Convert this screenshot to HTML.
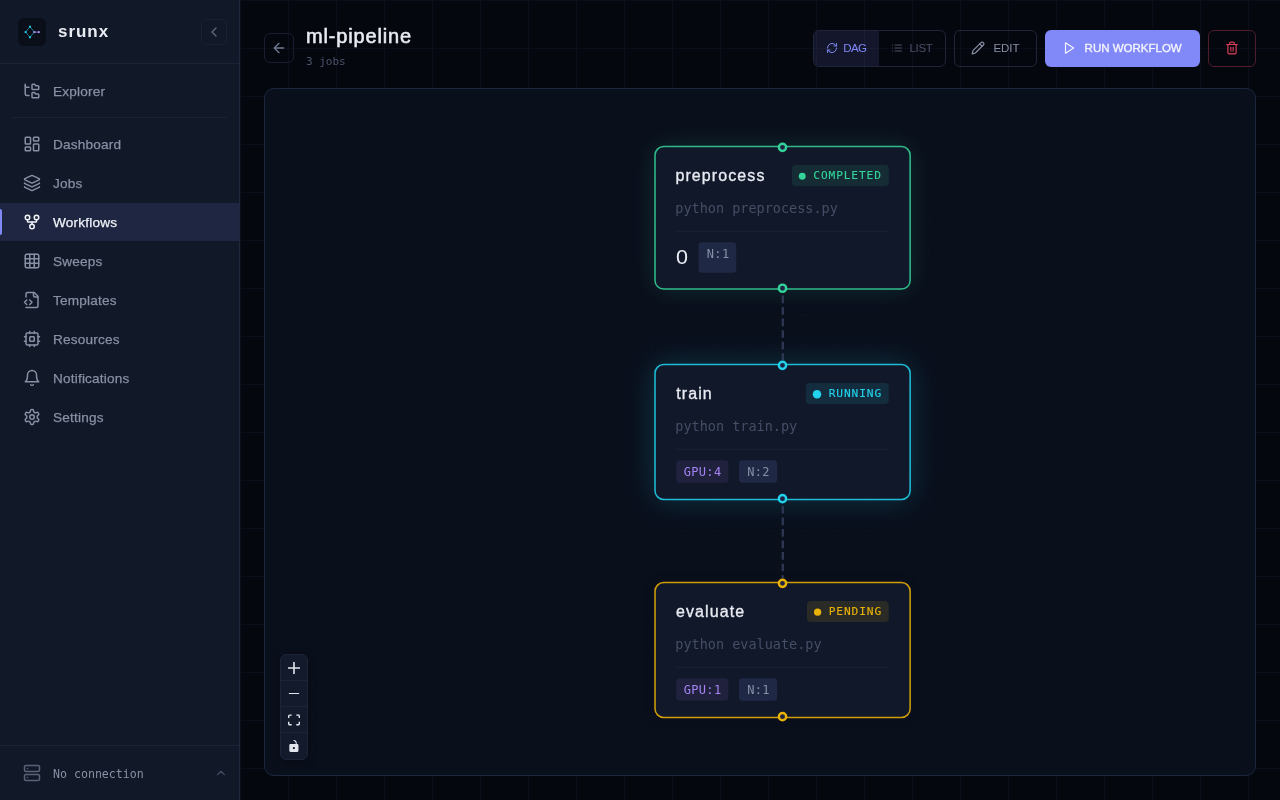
<!DOCTYPE html>
<html lang="en">
<head>
<meta charset="utf-8">
<title>srunx - ml-pipeline</title>
<style>
*{box-sizing:border-box;margin:0;padding:0}
html,body{width:1280px;height:800px;overflow:hidden}
body{position:relative;background:#05070f;color:#e6e9f0;font-family:"Liberation Sans",sans-serif}
#root{position:absolute;left:0;top:0;width:1280px;height:800px;will-change:transform}
svg.ic{fill:none;stroke:currentColor;stroke-width:2;stroke-linecap:round;stroke-linejoin:round;display:block}
.mono{font-family:"DejaVu Sans Mono","Liberation Mono",monospace}

/* main background grid */
#main{position:absolute;left:240px;top:0;width:1040px;height:800px;background-color:#05070f;
 background-image:linear-gradient(to right,#0b0e1a 1px,transparent 1px),linear-gradient(to bottom,#0b0e1a 1px,transparent 1px);
 background-size:48px 48px;background-position:-240px 0}

/* sidebar */
#side{position:absolute;left:0;top:0;width:240px;height:800px;background:#111827;border-right:1px solid #1e293d}
#side .hdr{position:absolute;left:0;top:0;width:239px;height:64px;border-bottom:1px solid #1c2336}
#logo{position:absolute;left:18px;top:18px;width:28px;height:28px;border-radius:6px;background:#0a0e18}
#brand{position:absolute;left:58px;top:21px;font-weight:700;font-size:17px;line-height:22px;color:#e8ebf2;letter-spacing:.95px;white-space:nowrap}
#collapse{position:absolute;left:201px;top:19px;width:26px;height:26px;border:1px solid #1a2135;border-radius:6px;color:#5d667b}
.nav{position:absolute;left:0;width:239px;height:38px;color:#8890a5;font-size:13.6px;letter-spacing:.19px}
.nav svg{position:absolute;left:23px;top:10px;width:18px;height:18px}
.nav span{position:absolute;left:53px;top:.6px;line-height:38px;white-space:nowrap;-webkit-text-stroke:.25px currentColor}
.nav.active{background:#1e2641;color:#f1f3f8}
.nav.active:before{content:"";position:absolute;left:0;top:6px;width:2px;height:26px;background:#8188f5;border-radius:0 2px 2px 0}
#sep{position:absolute;left:12px;top:117px;width:215px;height:1px;background:#1a2133}
#foot{position:absolute;left:0;top:745px;width:239px;height:55px;border-top:1px solid #1c2336;color:#6b7488}
#foot svg.srv{position:absolute;left:23px;top:18px;width:18px;height:18px;color:#596277}
#foot span{position:absolute;left:53px;top:.5px;line-height:55px;font-size:11.6px;white-space:nowrap;color:#8890a5}
#foot svg.chev{position:absolute;left:214px;top:20.4px;width:14px;height:14px;color:#434c60}

/* header */
#back{position:absolute;left:264px;top:33px;width:30px;height:30px;border:1px solid #181d2f;border-radius:6px;color:#6f7990}
#back svg{width:16px;height:16px;margin:6px}
#title{position:absolute;left:306px;top:23.6px;font-size:20px;line-height:24px;font-weight:400;-webkit-text-stroke:.55px #e8ebf2;letter-spacing:.83px;color:#e8ebf2;white-space:nowrap}
#sub{position:absolute;left:306px;top:54.8px;font-size:11px;line-height:14px;color:#4b5468;white-space:nowrap}
.btn{position:absolute;top:30px;height:37px;border:1px solid #1f2437;border-radius:6px;font-size:11.5px;color:#8890a5;white-space:nowrap}
.btn svg{position:absolute;width:14px;height:14px;top:10px}
.btn span{position:absolute;top:0;line-height:35px}
#seg{left:813px;width:133px;overflow:hidden}
#seg .on{position:absolute;left:0;top:0;width:65px;height:35px;background:rgba(129,140,248,.12)}
#edit{left:954px;width:83px}
#run{left:1045px;width:155px;border:none;background:#8188f7;color:#f3f4ff}
#del{left:1208px;width:48px;border-color:#4f1d2c;color:#e0405a}

/* canvas */
#canvas{position:absolute;left:264px;top:88px;width:992px;height:688px;border:1px solid #1c2740;border-radius:10px;background-color:#0a0f1c;overflow:hidden;
 background-image:radial-gradient(circle,#111727 0.5px,transparent 1.1px);background-size:30.8px 30.8px;background-position:1.6px -5.0px}

#shapes{position:absolute;left:0;top:0;display:block}
.glow{position:absolute;border-radius:9px}
/* flow text (svg) */
#shapes text{white-space:pre}
#shapes .mono{font-family:"DejaVu Sans Mono","Liberation Mono",monospace}
#shapes .t{font-family:"Liberation Sans",sans-serif;font-size:16px;fill:#e8ebf2;stroke:#e8ebf2;stroke-width:.32px;letter-spacing:1.1px}
#shapes .bt{font-size:11.2px;letter-spacing:.88px;stroke-width:.12px}
#shapes .cmd{font-size:13.5px;fill:#444e65}
#shapes .ct{font-size:12px;letter-spacing:.33px}
#shapes .ct.g{fill:#a583f2}
#shapes .ct.n{fill:#8890a5}
#shapes .zero{font-family:"Liberation Sans",sans-serif;font-size:19.6px;fill:#e8ebf2}

/* controls */
#ctl{position:absolute;left:280px;top:654px;width:28px;height:106px;border:1px solid #1c2438;border-radius:6px;background:#131a2b;overflow:hidden;box-shadow:0 2px 8px rgba(0,0,0,.4)}
#ctl div{width:26px;height:26px;border-bottom:1px solid #1c2438;display:flex;align-items:center;justify-content:center}
#ctl div:last-child{border-bottom:none}
#ctl svg{fill:#e2e5ee;width:12px;height:12px;display:block}
</style>
</head>
<body>
<div id="root">
<div id="main"></div>
<div id="back"><svg class="ic" viewBox="0 0 24 24"><path d="m12 19-7-7 7-7"/><path d="M19 12H5"/></svg></div>
<div id="title">ml-pipeline</div>
<div id="sub" class="mono">3 jobs</div>
<div id="seg" class="btn"><div class="on"></div>
  <svg class="ic" viewBox="0 0 24 24" style="left:12px;top:11px;width:12px;height:12px;color:#8188f7"><path d="M3 12a9 9 0 0 1 9-9 9.75 9.75 0 0 1 6.74 2.74L21 8"/><path d="M21 3v5h-5"/><path d="M21 12a9 9 0 0 1-9 9 9.75 9.75 0 0 1-6.74-2.74L3 16"/><path d="M8 16H3v5"/></svg>
  <span style="left:29.2px;color:#8188f7;letter-spacing:-.6px">DAG</span>
  <svg class="ic" viewBox="0 0 24 24" style="left:77px;top:11px;width:12px;height:12px;color:#4a5166"><path d="M3 12h.01"/><path d="M3 18h.01"/><path d="M3 6h.01"/><path d="M8 12h13"/><path d="M8 18h13"/><path d="M8 6h13"/></svg>
  <span style="left:95.5px;color:#4a5166;letter-spacing:-.3px">LIST</span>
</div>
<div id="edit" class="btn">
  <svg class="ic" viewBox="0 0 24 24" style="left:16.1px"><path d="M21.174 6.812a1 1 0 0 0-3.986-3.987L3.842 16.174a2 2 0 0 0-.5.83l-1.321 4.352a.5.5 0 0 0 .623.622l4.353-1.32a2 2 0 0 0 .83-.497z"/><path d="m15 5 4 4"/></svg>
  <span style="left:38.4px;top:-.4px">EDIT</span>
</div>
<div id="run" class="btn">
  <svg class="ic" viewBox="0 0 24 24" style="left:16.8px;top:11px"><polygon points="6 3 20 12 6 21 6 3"/></svg>
  <span style="left:39.6px;line-height:37px;-webkit-text-stroke:.35px currentColor">RUN WORKFLOW</span>
</div>
<div id="del" class="btn">
  <svg class="ic" viewBox="0 0 24 24" style="left:16.1px"><path d="M3 6h18"/><path d="M19 6v14c0 1-1 2-2 2H7c-1 0-2-1-2-2V6"/><path d="M8 6V4c0-1 1-2 2-2h4c1 0 2 1 2 2v2"/><line x1="10" x2="10" y1="11" y2="17"/><line x1="14" x2="14" y1="11" y2="17"/></svg>
</div>
<div id="canvas"></div>
<div class="glow" style="left:655.25px;top:146.80px;width:254.65px;height:141.97px;box-shadow:0 0 26px rgba(52,211,153,.16)"></div>
<div class="glow" style="left:655.25px;top:364.80px;width:254.65px;height:134.40px;box-shadow:0 0 30px rgba(34,211,238,.22)"></div>
<div class="glow" style="left:655.25px;top:582.80px;width:254.65px;height:134.40px;box-shadow:0 0 12px rgba(0,0,0,.18)"></div>
<svg id="shapes" width="1280" height="800" viewBox="0 0 1280 800">
<line x1="782.8" y1="295.5" x2="782.8" y2="360.0" stroke="#2f3853" stroke-width="2.3" stroke-dasharray="7.7 3.85"/>
<line x1="782.8" y1="505.9" x2="782.8" y2="578.0" stroke="#2f3853" stroke-width="2.3" stroke-dasharray="7.7 3.85"/>
<rect x="655.02" y="146.57" width="255.11" height="142.43" rx="8.6" fill="#111829" stroke="#34d399" stroke-opacity=".88" stroke-width="1.54"/>
<rect x="791.9" y="165.00" width="96.85" height="20.9" rx="3.6" fill="#152c34"/>
<circle cx="802.25" cy="176.20" r="3.45" fill="#34d399"/>
<rect x="676.1" y="230.70" width="212.7" height="1.1" fill="#1c2236"/>
<text class="t" x="675.4" y="181">preprocess</text>
<text class="bt mono" x="813.30" y="179" fill="#34d399" stroke="#34d399">COMPLETED</text>
<text class="cmd mono" x="675.3" y="213">python preprocess.py</text>
<rect x="655.02" y="364.57" width="255.11" height="134.86" rx="8.6" fill="#111829" stroke="#22d3ee" stroke-opacity=".88" stroke-width="1.54"/>
<rect x="805.9" y="383.00" width="82.85" height="20.9" rx="3.6" fill="#142d3e"/>
<circle cx="817.0" cy="394.20" r="4.25" fill="#22d3ee"/>
<rect x="676.1" y="448.70" width="212.7" height="1.1" fill="#1c2236"/>
<text class="t" x="676.2" y="399">train</text>
<text class="bt mono" x="828.70" y="397" fill="#22d3ee" stroke="#22d3ee">RUNNING</text>
<text class="cmd mono" x="675.3" y="431">python train.py</text>
<rect x="655.02" y="582.57" width="255.11" height="134.86" rx="8.6" fill="#111829" stroke="#eab308" stroke-opacity=".88" stroke-width="1.54"/>
<rect x="807.0" y="601.00" width="81.75" height="20.9" rx="3.6" fill="#2a2a26"/>
<circle cx="817.6" cy="612.20" r="3.6" fill="#eab308"/>
<rect x="676.1" y="666.70" width="212.7" height="1.1" fill="#1c2236"/>
<text class="t" x="675.9" y="617">evaluate</text>
<text class="bt mono" x="828.70" y="615" fill="#eab308" stroke="#eab308">PENDING</text>
<text class="cmd mono" x="675.3" y="649">python evaluate.py</text>
<rect x="698.6" y="242.25" width="37.65" height="30.5" rx="3.6" fill="#1f2945"/>
<text class="ct n mono" x="706.80" y="258">N:1</text>
<rect x="676.1" y="460.25" width="52.3" height="22.6" rx="3.6" fill="#1f213d"/>
<text class="ct g mono" x="683.70" y="476">GPU:4</text>
<rect x="739.0" y="460.25" width="38.1" height="22.6" rx="3.6" fill="#1f2945"/>
<text class="ct n mono" x="747.20" y="476">N:2</text>
<rect x="676.1" y="678.25" width="52.3" height="22.6" rx="3.6" fill="#1f213d"/>
<text class="ct g mono" x="683.70" y="694">GPU:1</text>
<rect x="739.0" y="678.25" width="38.1" height="22.6" rx="3.6" fill="#1f2945"/>
<text class="ct n mono" x="747.20" y="694">N:1</text>
<text class="zero" x="675.9" y="264" transform="translate(675.9 0) scale(1.1 1) translate(-675.9 0)">0</text>
<circle cx="782.5" cy="147.34" r="3.65" fill="#1e2442" stroke="#34d399" stroke-width="2.4"/>
<circle cx="782.5" cy="288.23" r="3.65" fill="#1e2442" stroke="#34d399" stroke-width="2.4"/>
<circle cx="782.5" cy="365.34" r="3.65" fill="#1e2442" stroke="#22d3ee" stroke-width="2.4"/>
<circle cx="782.5" cy="498.66" r="3.65" fill="#1e2442" stroke="#22d3ee" stroke-width="2.4"/>
<circle cx="782.5" cy="583.34" r="3.65" fill="#1e2442" stroke="#eab308" stroke-width="2.4"/>
<circle cx="782.5" cy="716.66" r="3.65" fill="#1e2442" stroke="#eab308" stroke-width="2.4"/>
</svg>
<div id="ctl">
  <div><svg viewBox="0 0 32 32"><path d="M32 18.133H18.133V32h-4.266V18.133H0v-4.266h13.867V0h4.266v13.867H32z"/></svg></div>
  <div><svg viewBox="0 0 32 5" style="height:1.6px"><path d="M0 0h32v4.2H0z"/></svg></div>
  <div><svg viewBox="0 0 32 30"><path d="M3.692 4.63c0-.53.4-.938.939-.938h5.215V0H4.708C2.13 0 0 2.054 0 4.63v5.216h3.692V4.631zM27.354 0h-5.2v3.692h5.17c.53 0 .984.4.984.939v5.215H32V4.631A4.624 4.624 0 0027.354 0zm.954 24.83c0 .532-.4.94-.939.94h-5.215v3.768h5.215c2.577 0 4.631-2.13 4.631-4.707v-5.139h-3.692v5.139zm-23.677.94c-.531 0-.939-.4-.939-.94v-5.138H0v5.139c0 2.577 2.13 4.707 4.708 4.707h5.138V25.77H4.631z"/></svg></div>
  <div><svg viewBox="0 0 25 32"><path d="M21.333 10.667H19.81V7.619C19.81 3.429 16.38 0 12.19 0c-4.114 1.828-1.37 2.133.305 2.438 1.676.305 4.42 2.59 4.42 5.181v3.048H3.047A3.056 3.056 0 000 13.714v15.238A3.056 3.056 0 003.048 32h18.285a3.056 3.056 0 003.048-3.048V13.714a3.056 3.056 0 00-3.048-3.047zM12.19 24.533a3.056 3.056 0 01-3.047-3.047 3.056 3.056 0 013.047-3.048 3.056 3.056 0 013.048 3.048 3.056 3.056 0 01-3.048 3.047z"/></svg></div>
</div>
<div id="side">
  <div class="hdr">
    <div id="logo"><svg viewBox="0 0 28 28" width="28" height="28" style="display:block">
      <g fill="#1b2336"><rect x="7.1" y="8.2" width="1" height="1"/><rect x="15.9" y="8.2" width="1" height="1"/><rect x="20.3" y="8.2" width="1" height="1"/><rect x="7.1" y="18.8" width="1" height="1"/><rect x="15.9" y="18.8" width="1" height="1"/><rect x="20.3" y="18.8" width="1" height="1"/></g>
      <path d="M12 8.7 7.6 14.1 12 19.3 16.4 14.1Z" fill="none" stroke="#22d3ee" stroke-width="0.55"/>
      <path d="M16.4 14.1H20.8" stroke="#a78bfa" stroke-width="0.7" fill="none"/>
      <g fill="#22d3ee"><rect x="11.05" y="7.75" width="1.9" height="1.9"/><rect x="6.65" y="13.15" width="1.9" height="1.9"/><rect x="11.05" y="18.35" width="1.9" height="1.9"/></g>
      <g fill="#b197fc"><rect x="15.45" y="13.15" width="1.9" height="1.9"/><rect x="19.8" y="13.15" width="1.9" height="1.9"/></g>
    </svg></div>
    <div id="brand">srunx</div>
    <div id="collapse"><svg class="ic" viewBox="0 0 24 24" style="width:16px;height:16px;margin:3.6px 4px"><path d="m15 18-6-6 6-6"/></svg></div>
  </div>
  <div class="nav" style="top:72px"><svg class="ic" viewBox="0 0 24 24"><path d="M20 10a1 1 0 0 0 1-1V6a1 1 0 0 0-1-1h-2.5a1 1 0 0 1-.8-.4l-.9-1.2A1 1 0 0 0 15 3h-2a1 1 0 0 0-1 1v5a1 1 0 0 0 1 1Z"/><path d="M20 21a1 1 0 0 0 1-1v-3a1 1 0 0 0-1-1h-2.9a1 1 0 0 1-.88-.55l-.42-.85a1 1 0 0 0-.92-.6H13a1 1 0 0 0-1 1v5a1 1 0 0 0 1 1Z"/><path d="M3 5a2 2 0 0 0 2 2h3"/><path d="M3 3v13a2 2 0 0 0 2 2h3"/></svg><span>Explorer</span></div>
  <div id="sep"></div>
  <div class="nav" style="top:125px"><svg class="ic" viewBox="0 0 24 24"><rect width="7" height="9" x="3" y="3" rx="1"/><rect width="7" height="5" x="14" y="3" rx="1"/><rect width="7" height="9" x="14" y="12" rx="1"/><rect width="7" height="5" x="3" y="16" rx="1"/></svg><span>Dashboard</span></div>
  <div class="nav" style="top:164px"><svg class="ic" viewBox="0 0 24 24"><path d="M12.83 2.18a2 2 0 0 0-1.66 0L2.6 6.08a1 1 0 0 0 0 1.83l8.58 3.91a2 2 0 0 0 1.66 0l8.58-3.9a1 1 0 0 0 0-1.83z"/><path d="M2 12a1 1 0 0 0 .58.91l8.6 3.91a2 2 0 0 0 1.65 0l8.58-3.9A1 1 0 0 0 22 12"/><path d="M2 17a1 1 0 0 0 .58.91l8.6 3.91a2 2 0 0 0 1.65 0l8.58-3.9A1 1 0 0 0 22 17"/></svg><span>Jobs</span></div>
  <div class="nav active" style="top:203px"><svg class="ic" viewBox="0 0 24 24"><circle cx="12" cy="18" r="3"/><circle cx="6" cy="6" r="3"/><circle cx="18" cy="6" r="3"/><path d="M18 9v2c0 .6-.4 1-1 1H7c-.6 0-1-.4-1-1V9"/><path d="M12 12v3"/></svg><span>Workflows</span></div>
  <div class="nav" style="top:242px"><svg class="ic" viewBox="0 0 24 24"><rect width="18" height="18" x="3" y="3" rx="2"/><path d="M3 9h18"/><path d="M3 15h18"/><path d="M9 3v18"/><path d="M15 3v18"/></svg><span>Sweeps</span></div>
  <div class="nav" style="top:281px"><svg class="ic" viewBox="0 0 24 24"><path d="M4 22h14a2 2 0 0 0 2-2V7l-5-5H6a2 2 0 0 0-2 2v4"/><path d="M14 2v4a2 2 0 0 0 2 2h4"/><path d="m5 12-3 3 3 3"/><path d="m9 18 3-3-3-3"/></svg><span>Templates</span></div>
  <div class="nav" style="top:320px"><svg class="ic" viewBox="0 0 24 24"><rect width="16" height="16" x="4" y="4" rx="2"/><rect width="6" height="6" x="9" y="9" rx="1"/><path d="M15 2v2"/><path d="M15 20v2"/><path d="M2 15h2"/><path d="M2 9h2"/><path d="M20 15h2"/><path d="M20 9h2"/><path d="M9 2v2"/><path d="M9 20v2"/></svg><span>Resources</span></div>
  <div class="nav" style="top:359px"><svg class="ic" viewBox="0 0 24 24"><path d="M6 8a6 6 0 0 1 12 0c0 7 3 9 3 9H3s3-2 3-9"/><path d="M10.3 21a1.94 1.94 0 0 0 3.4 0"/></svg><span>Notifications</span></div>
  <div class="nav" style="top:398px"><svg class="ic" viewBox="0 0 24 24"><path d="M12.22 2h-.44a2 2 0 0 0-2 2v.18a2 2 0 0 1-1 1.73l-.43.25a2 2 0 0 1-2 0l-.15-.08a2 2 0 0 0-2.73.73l-.22.38a2 2 0 0 0 .73 2.73l.15.1a2 2 0 0 1 1 1.72v.51a2 2 0 0 1-1 1.74l-.15.09a2 2 0 0 0-.73 2.73l.22.38a2 2 0 0 0 2.73.73l.15-.08a2 2 0 0 1 2 0l.43.25a2 2 0 0 1 1 1.73V20a2 2 0 0 0 2 2h.44a2 2 0 0 0 2-2v-.18a2 2 0 0 1 1-1.73l.43-.25a2 2 0 0 1 2 0l.15.08a2 2 0 0 0 2.73-.73l.22-.39a2 2 0 0 0-.73-2.73l-.15-.08a2 2 0 0 1-1-1.74v-.5a2 2 0 0 1 1-1.74l.15-.09a2 2 0 0 0 .73-2.73l-.22-.38a2 2 0 0 0-2.73-.73l-.15.08a2 2 0 0 1-2 0l-.43-.25a2 2 0 0 1-1-1.73V4a2 2 0 0 0-2-2z"/><circle cx="12" cy="12" r="3"/></svg><span>Settings</span></div>
  <div id="foot">
    <svg class="ic srv" viewBox="0 0 24 24"><rect width="20" height="8" x="2" y="2" rx="2" ry="2"/><rect width="20" height="8" x="2" y="14" rx="2" ry="2"/><line x1="6" x2="6.01" y1="6" y2="6"/><line x1="6" x2="6.01" y1="18" y2="18"/></svg>
    <span class="mono">No connection</span>
    <svg class="ic chev" viewBox="0 0 24 24"><path d="m18 15-6-6-6 6"/></svg>
  </div>
</div>
</div>
</body>
</html>
